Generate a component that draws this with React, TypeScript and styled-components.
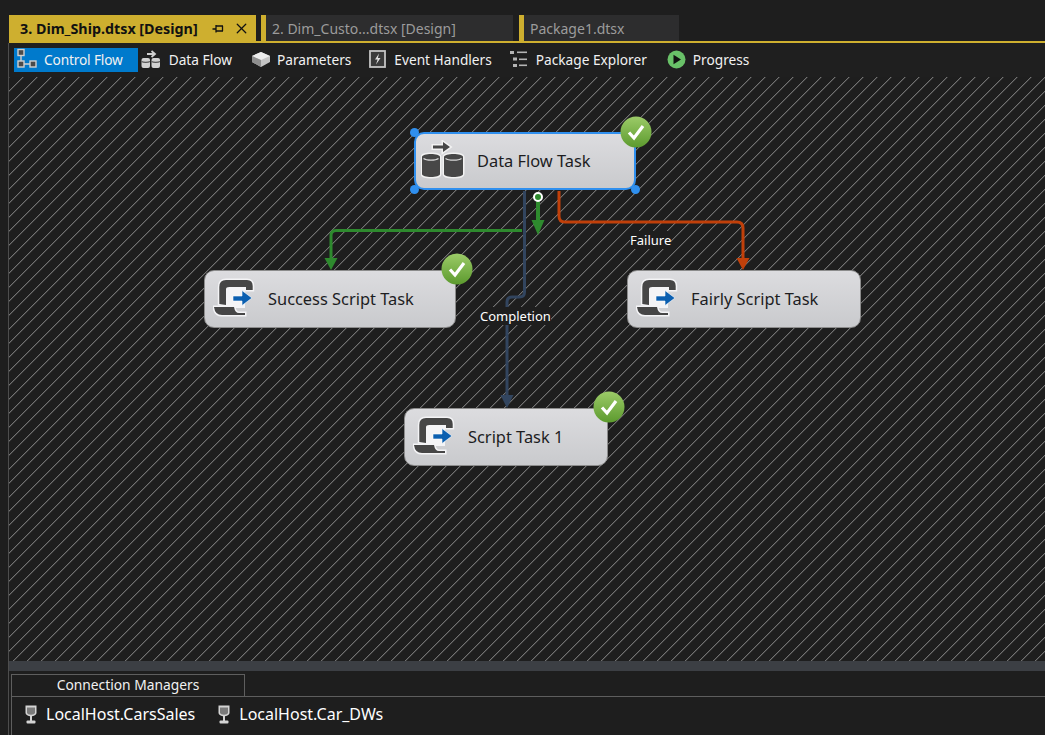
import * as React from 'react'
import styled, { createGlobalStyle } from 'styled-components'
import { X } from 'lucide-react'

const GlobalStyle = createGlobalStyle`
    html, body {
        margin: 0;
        height: 100%;
        overflow: hidden;
        background: #1e1e1e;
    }
    * { box-sizing: border-box; }
`

const GOLD = '#ceaf2f'
const FONT = '"Noto Sans", "Open Sans", sans-serif'

const Page = styled.div`
    height: 735px;
    padding: 15px 0 0 8px;
    display: flex;
    flex-direction: column;
    font-family: ${FONT};
`

const TabStrip = styled.div`
    display: flex;
    align-items: flex-start;
    height: 28px;
    margin-left: 1px;
    border-bottom: 2px solid ${GOLD};
    flex: none;
`

const ActiveTab = styled.div`
    width: 247px;
    height: 27px;
    background: ${GOLD};
    color: #111;
    font-size: 14.3px;
    font-weight: 700;
    display: flex;
    align-items: center;
    padding-left: 11px;
    white-space: nowrap;
`

const TabTitle = styled.span`
    width: 192px;
    flex: none;
`

const TabIcons = styled.span`
    display: flex;
    align-items: center;
    gap: 9px;
`

const IdleTab = styled.div<{ $w: number; $gap: number }>`
    width: ${p => p.$w}px;
    margin-left: ${p => p.$gap}px;
    height: 26px;
    background: #2d2d2e;
    border-left: 5px solid ${GOLD};
    color: #9c9c9c;
    font-size: 14px;
    display: flex;
    align-items: center;
    padding-left: 6px;
    white-space: nowrap;
`

const Workspace = styled.div`
    flex: 1;
    display: flex;
    flex-direction: column;
    border-left: 1px solid #4d4d4d;
    min-height: 0;
`

const Toolbar = styled.div`
    height: 34px;
    flex: none;
    display: flex;
    align-items: center;
    gap: 1px;
    padding-left: 5px;
    background: #1f1f1f;
`

const ToolButton = styled.div<{ $active?: boolean; $pad: number }>`
    height: 24px;
    display: flex;
    align-items: center;
    padding: 0 ${p => p.$pad}px 2px 2px;
    background: ${p => (p.$active ? '#007acc' : 'transparent')};
    color: #f1f1f1;
    font-size: 13.7px;
    letter-spacing: ${p => (p.$active ? '-0.15px' : '0')};
    white-space: nowrap;
`

const ToolIcon = styled.span<{ $left?: number }>`
    width: 28px;
    padding-left: ${p => p.$left ?? 0}px;
    flex: none;
    display: flex;
    align-items: center;
`

const Canvas = styled.div`
    position: relative;
    height: 584px;
    flex: none;
    overflow: hidden;
    background: #1e1e1e;
`

const Wires = styled.svg`
    position: absolute;
    inset: 0;
    width: 100%;
    height: 100%;
`

const Node = styled.div<{ $x: number; $y: number; $w: number; $selected?: boolean }>`
    position: absolute;
    left: ${p => p.$x - 9}px;
    top: ${p => p.$y - 77}px;
    width: ${p => p.$w}px;
    height: 58px;
    border-radius: 10px;
    background: linear-gradient(#dcdcdf, #c9cacd);
    border: ${p => (p.$selected ? '2px solid #2f8fee' : '1px solid #8c8c8c')};
    display: flex;
    align-items: center;
    padding: 0 0 2px ${p => (p.$selected ? 5 : 8)}px;
    color: #1d1d1f;
    font-size: 16.4px;
    white-space: nowrap;
`

const NodeIcon = styled.span<{ $w: number }>`
    width: ${p => p.$w}px;
    flex: none;
    display: flex;
`

const Handle = styled.i<{ $right?: boolean; $bottom?: boolean }>`
    position: absolute;
    width: 9px;
    height: 9px;
    border-radius: 50%;
    background: #2f8fee;
    ${p => (p.$right ? 'right: -6px;' : 'left: -6px;')}
    ${p => (p.$bottom ? 'bottom: -6px;' : 'top: -6px;')}
`

const CheckBadge = styled.span`
    position: absolute;
    right: -18px;
    top: -18px;
    width: 32px;
    height: 32px;
`

const WireLabel = styled.span<{ $x: number; $y: number }>`
    position: absolute;
    left: ${p => p.$x - 9}px;
    top: ${p => p.$y - 77}px;
    color: #fff;
    font-size: 13px;
    line-height: 18px;
    background: #1e1e1e;
`

const Splitter = styled.div`
    height: 10px;
    flex: none;
    background: #3c3f44;
`

const ManagerPanel = styled.div`
    flex: 1;
    padding: 3px 0 0 2px;
    display: flex;
    flex-direction: column;
`

const ManagerTab = styled.div`
    width: 234px;
    height: 22px;
    flex: none;
    border: 1px solid #5e5e5e;
    border-bottom: none;
    color: #f1f1f1;
    font-size: 13.8px;
    line-height: 20px;
    text-align: center;
`

const ManagerTray = styled.div`
    flex: 1;
    border-top: 1px solid #5e5e5e;
    border-left: 1px solid #5e5e5e;
    display: flex;
    align-items: flex-start;
    padding: 6px 0 0 13px;
    gap: 23px;
`

const Connection = styled.div`
    display: flex;
    align-items: center;
    gap: 9px;
    color: #fff;
    font-size: 16px;
    line-height: 22px;
    white-space: nowrap;
`

const ControlFlowIcon = () => (
    <svg width="22" height="22" viewBox="0 0 22 22" fill="none" stroke="#cfcfcf" strokeWidth="1.4">
        <rect x="2" y="1.5" width="6" height="6" fill="#4a4a4a" />
        <rect x="2" y="13" width="6" height="6" fill="#4a4a4a" />
        <rect x="14" y="13" width="6" height="6" fill="#4a4a4a" />
        <path d="M5 7.5V13M8 16h6" />
    </svg>
)

const DataFlowSmallIcon = () => (
    <svg width="20" height="20" viewBox="0 0 20 20">
        <path d="M6 5h7M10.500 2 14 5l-3.500 3" fill="none" stroke="#cfcfcf" strokeWidth="1.800" />
        <rect x="0.500" y="9" width="8.500" height="10" rx="2" fill="#d2d2d2" />
        <rect x="10.500" y="9" width="8.500" height="10" rx="2" fill="#d2d2d2" />
        <path d="M0.500 12.500c2 1.200 6.500 1.200 8.500 0M10.500 12.500c2 1.200 6.500 1.200 8.500 0" fill="none" stroke="#555" strokeWidth="1.200" />
    </svg>
)

const ParametersIcon = () => (
    <svg width="20" height="18" viewBox="0 0 20 18">
        <path d="M10 2 19 6v6l-9 5-9-5V6z" fill="#c4c4c4" />
        <path d="M10 2 19 6l-9 4-9-4z" fill="#ececec" />
        <path d="M10 10v7L1 12V6z" fill="#8e8e8e" />
    </svg>
)

const EventIcon = () => (
    <svg width="17" height="18" viewBox="0 0 17 18">
        <rect x="1" y="1" width="15" height="16" fill="#3a3a3a" stroke="#c4c4c4" strokeWidth="1.800" />
        <path d="M10 3.500 6 9.500h2.600L7 14.500l4.500-6.500H8.900z" fill="#e0e0e0" />
    </svg>
)

const ExplorerIcon = () => (
    <svg width="18" height="18" viewBox="0 0 18 18" fill="#b4b4b4">
        <rect x="0" y="1" width="4" height="3" />
        <rect x="7" y="1.500" width="10" height="1.600" />
        <rect x="3" y="7.500" width="4" height="3" />
        <rect x="9" y="8.500" width="8" height="1.600" />
        <rect x="3" y="14" width="4" height="3" />
        <rect x="9" y="14.500" width="8" height="1.600" />
    </svg>
)

const ProgressIcon = () => (
    <svg width="19" height="19" viewBox="0 0 19 19">
        <circle cx="9.500" cy="9.500" r="9" fill="#69c168" />
        <path d="M6.500 4.800 14 9.500l-7.500 4.700z" fill="#111" />
    </svg>
)

const PinIcon = () => (
    <svg width="12" height="12" viewBox="0 0 12 12" fill="none" stroke="#111" strokeWidth="1.300">
        <path d="M0.500 6H4M4 2v7.500M4 3h7M4 8h7M10.500 3v5" />
    </svg>
)

const DataFlowIcon = () => (
    <svg width="44" height="40" viewBox="0 0 44 40">
        <g stroke="#f2f2f2" strokeWidth="3" paintOrder="stroke" fill="#474747">
            <path d="M12 5.500H22V2L29 7L22 12V8.500H12z" />
            <path d="M1 17c0-4 18-4 18 0v17c0 4-18 4-18 0z" />
            <path d="M23 17c0-4 19-4 19 0v17c0 4-19 4-19 0z" />
        </g>
        <path d="M2.500 18.500c3 2.200 12 2.200 15 0M24.500 18.500c3 2.200 13 2.200 16 0" fill="none" stroke="#d8d8d8" strokeWidth="1.300" />
    </svg>
)

const ScriptIcon = () => (
    <svg width="42" height="42" viewBox="-1 0 42 42">
        <rect x="11" y="7" width="20" height="24" fill="#f4f4f6" />
        <g stroke="#f4f4f6" strokeWidth="3" paintOrder="stroke" fill="#464646">
            <path d="M5.300 27V10Q5.300 3 12 3H33Q38.700 3 38.700 9V13H32V10H15.300Q12 10 12 12.300V28z" />
            <path d="M0 30H20q1 6 5 6h6v2H8Q1 38 0 30z" />
        </g>
        <path d="M19 19h9v-5.500l10 7.500-10 7.500V24h-9z" fill="#0b5fb0" stroke="#fff" strokeWidth="0.600" />
    </svg>
)

const Check = ({ id }: { id: string }) => (
    <CheckBadge>
        <svg width="32" height="32" viewBox="0 0 32 32">
            <defs>
                <linearGradient id={id} x1="0" y1="0" x2="0" y2="1">
                    <stop offset="0" stopColor="#9ccb68" />
                    <stop offset="1" stopColor="#5c9a2e" />
                </linearGradient>
            </defs>
            <circle cx="16" cy="16" r="15.500" fill={`url(#${id})`} />
            <path d="m9 16.500 5 5.500 9-12" fill="none" stroke="#fff" strokeWidth="3.200" />
        </svg>
    </CheckBadge>
)

const Database = () => (
    <svg width="12" height="20" viewBox="0 0 12 20">
        <path d="M0.500 1.500h11v7c0 5-11 5-11 0z" fill="#d4d4d4" />
        <path d="M2 3.500h8v5c0 3-8 3-8 0z" fill="#7a7a7a" />
        <rect x="5" y="12" width="2" height="5" fill="#d4d4d4" />
        <rect x="1.500" y="16.500" width="9" height="3" rx="1" fill="#d4d4d4" />
    </svg>
)

type WireProps = { d: string; color: string; tip: [number, number]; head?: number; width?: number }

const Wire = ({ d, color, tip, head = 12, width = 3 }: WireProps) => (
    <g>
        <path d={d} fill="none" stroke={color} strokeWidth={width} />
        <path d={`M${tip[0]} ${tip[1]}l-6.500 -${head}h13z`} fill={color} />
    </g>
)

// one 14px tile of the hatch, drawn pixel by pixel so the stair steps stay crisp
const hatchSteps = Array.from({ length: 14 }, (_, i) => i)

const Connectors = () => (
    <Wires>
        <defs>
            <pattern id="hatch" width="14" height="14" patternUnits="userSpaceOnUse">
                {hatchSteps.map(i => (
                    <g key={i}>
                        <rect x={(i + 1) % 14} y={13 - i} width="1" height="1" fill="#3c3c3c" />
                        <rect x={i} y={13 - i} width="1" height="1" fill="#727272" />
                    </g>
                ))}
            </pattern>
        </defs>
        <rect width="100%" height="100%" fill="url(#hatch)" />
        <g transform="translate(-9 -77)">
            <Wire d="M524.500 191V292q0 5 -5 5H512q-5 0 -5 5V396" color="#32455f" tip={[507, 408]} head={13} />
            <Wire d="M522 230.500H336q-5 0 -5 5V260" color="#2e8a2e" tip={[331, 270]} />
            <Wire d="M538 200V222" color="#2e8a2e" tip={[538, 235]} head={15} width={4} />
            <Wire d="M559 191V216q0 6 6 6H737q6 0 6 6V260" color="#c1400a" tip={[743, 270]} />
            <circle cx="538" cy="197" r="4" fill="#2e8a2e" stroke="#fff" strokeWidth="2" />
        </g>
    </Wires>
)

const tasks = [
    { name: 'Success Script Task', x: 204, y: 270, w: 252, ok: true },
    { name: 'Fairly Script Task', x: 627, y: 270, w: 234, ok: false },
    { name: 'Script Task 1', x: 404, y: 408, w: 204, ok: true },
]

const App = () => {
    return (
        <Page>
            <GlobalStyle />
            <TabStrip>
                <ActiveTab>
                    <TabTitle>3. Dim_Ship.dtsx [Design]</TabTitle>
                    <TabIcons>
                        <PinIcon />
                        <X size={17} color="#111" strokeWidth={1.8} />
                    </TabIcons>
                </ActiveTab>
                <IdleTab $w={252} $gap={5}>2. Dim_Custo...dtsx [Design]</IdleTab>
                <IdleTab $w={160} $gap={6}>Package1.dtsx</IdleTab>
            </TabStrip>
            <Workspace>
                <Toolbar>
                    <ToolButton $active $pad={15}><ToolIcon><ControlFlowIcon /></ToolIcon>Control Flow</ToolButton>
                    <ToolButton $pad={14}><ToolIcon><DataFlowSmallIcon /></ToolIcon>Data Flow</ToolButton>
                    <ToolButton $pad={12}><ToolIcon $left={2}><ParametersIcon /></ToolIcon>Parameters</ToolButton>
                    <ToolButton $pad={13}><ToolIcon $left={3}><EventIcon /></ToolIcon>Event Handlers</ToolButton>
                    <ToolButton $pad={15}><ToolIcon $left={2}><ExplorerIcon /></ToolIcon>Package Explorer</ToolButton>
                    <ToolButton $pad={15}><ToolIcon $left={2}><ProgressIcon /></ToolIcon>Progress</ToolButton>
                </Toolbar>
                <Canvas>
                    <Connectors />
                    <WireLabel $x={630} $y={231}>Failure</WireLabel>
                    <WireLabel $x={480} $y={307}>Completion</WireLabel>
                    <Node $x={414} $y={132} $w={222} $selected>
                        <NodeIcon $w={56}><DataFlowIcon /></NodeIcon>
                        Data Flow Task
                        <Handle />
                        <Handle $bottom />
                        <Handle $right $bottom />
                        <Check id="ok-data" />
                    </Node>
                    {tasks.map(t => (
                        <Node key={t.name} $x={t.x} $y={t.y} $w={t.w}>
                            <NodeIcon $w={55}><ScriptIcon /></NodeIcon>
                            {t.name}
                            {t.ok && <Check id={`ok-${t.x}`} />}
                        </Node>
                    ))}
                </Canvas>
                <Splitter />
                <ManagerPanel>
                    <ManagerTab>Connection Managers</ManagerTab>
                    <ManagerTray>
                        <Connection><Database />LocalHost.CarsSales</Connection>
                        <Connection><Database />LocalHost.Car_DWs</Connection>
                    </ManagerTray>
                </ManagerPanel>
            </Workspace>
        </Page>
    )
}

export default App
